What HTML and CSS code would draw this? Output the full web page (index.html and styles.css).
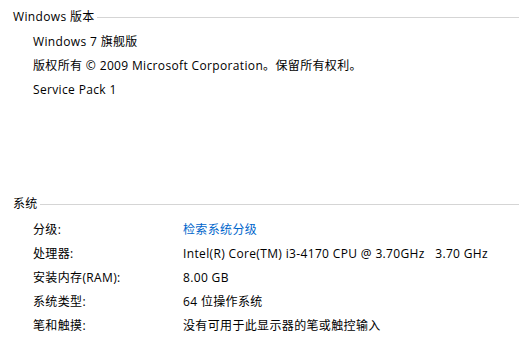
FILE: index.html
```html
<!DOCTYPE html>
<html lang="zh-CN">
<head>
    <meta charset="UTF-8">
    <title>系统</title>
    <link rel="stylesheet" href="styles.css">
</head>
<body>
    <div class="section">
        <div class="section-title"><span>Windows 版本</span><div class="rule"></div></div>
        <div class="edition">
            <div class="line">Windows 7 旗舰版</div>
            <div class="line">版权所有 © 2009 Microsoft Corporation。保留所有权利。</div>
            <div class="line">Service Pack 1</div>
        </div>
    </div>

    <div class="section system">
        <div class="section-title"><span>系统</span><div class="rule"></div></div>
        <div class="props">
            <div class="label">分级:</div>
            <div class="value"><a href="#" class="link">检索系统分级</a></div>
            <div class="label">处理器:</div>
            <div class="value">Intel(R) Core(TM) i3-4170 CPU @ 3.70GHz&nbsp;&nbsp;&nbsp;3.70 GHz</div>
            <div class="label">安装内存(RAM):</div>
            <div class="value">8.00 GB</div>
            <div class="label">系统类型:</div>
            <div class="value">64 位操作系统</div>
            <div class="label">笔和触摸:</div>
            <div class="value">没有可用于此显示器的笔或触控输入</div>
        </div>
    </div>
</body>
</html>
```

FILE: styles.css
```css
body {
    margin: 0;
    padding: 6px 2px 0 13px;
    background: #fff;
    color: #000;
    font-family: "Open Sans", "Noto Sans CJK SC", sans-serif;
    font-size: 12px;
    letter-spacing: 0.35px;
}
.section-title {
    display: flex;
    align-items: center;
    height: 20px;
}
.rule {
    flex: 1;
    height: 1px;
    margin: 2px 0 0 2px;
    background: #d5d5d5;
}
.edition {
    padding: 4px 0 0 20px;
}
.line {
    height: 24px;
    line-height: 24px;
}
.system {
    margin-top: 91px;
}
.props {
    display: grid;
    grid-template-columns: 150px 1fr;
    padding: 5px 0 0 20px;
    grid-auto-rows: 24px;
    line-height: 24px;
}
.link {
    color: #0066cc;
    text-decoration: none;
}
```
